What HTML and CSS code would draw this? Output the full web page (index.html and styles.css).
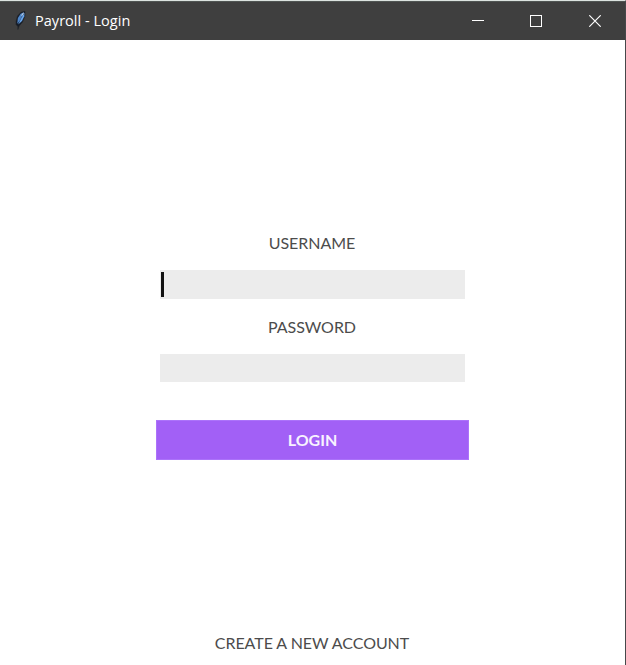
FILE: index.html
```html
<!DOCTYPE html>
<html lang="en">
<head>
<meta charset="utf-8">
<title>Payroll - Login</title>
<link rel="stylesheet" href="styles.css">
</head>
<body>
<div class="window">
  <header class="titlebar">
    <svg class="feather" width="14" height="22" viewBox="0 0 14 22">
      <path d="M12 1.2 8 2.2 4.5 6 3 11 3 14.5 4.8 16.5 4.9 19.5 6.2 16 9.6 12 12 6Z" fill="#151b26" stroke="#24272b" stroke-width=".6"/>
      <path d="M10.8 2.2 7.6 3.8 4.9 8 4.2 13.8 7.4 10.2Z" fill="#4f86c9"/>
      <path d="M11.5 2.8 7.9 8.5 5.2 14.4 9 11 11.3 6.3Z" fill="#69a6ec"/>
      <path d="M9 6 5.4 13.6" fill="none" stroke="#315a8e" stroke-width=".6"/>
      <path d="M10.6 2.8 8.6 5.6" stroke="#b7cfe8" stroke-width="1.1"/>
    </svg>
    <h1 class="title">Payroll - Login</h1>
    <div class="controls">
      <svg width="12" height="12" viewBox="0 0 12 12" shape-rendering="crispEdges"><path d="M0 5.5H12" stroke="#fff"/></svg>
      <svg width="12" height="12" viewBox="0 0 12 12" shape-rendering="crispEdges"><path d="M.5 .5H11.5V11.5H.5Z" fill="none" stroke="#fff"/></svg>
      <svg class="close" width="12" height="12" viewBox="0 0 12 12"><path d="M.3 .3 11.7 11.7M11.7 .3 .3 11.7" stroke="#fff" stroke-width="1.15"/></svg>
    </div>
  </header>
  <main class="content">
    <label class="label username" for="user">USERNAME</label>
    <div class="field first" id="user"><span class="caret"></span></div>
    <label class="label password" for="pass">PASSWORD</label>
    <div class="field second" id="pass"></div>
    <button class="login"><span class="login-text">LOGIN</span></button>
    <a class="label create">CREATE A NEW ACCOUNT</a>
  </main>
</div>
</body>
</html>
```
FILE: styles.css
```css
* { box-sizing: border-box; }
body { margin: 0; background: #fff; overflow: hidden; }
.window {
  height: 665px;
  border-right: 1px solid #46484a;
  border-top: 1px solid #dce3e0;
  display: flex;
  flex-direction: column;
}
.titlebar {
  height: 39px;
  flex: none;
  background: #3f3f3f;
  border-top: 1px solid #505553;
  display: flex;
  align-items: center;
  padding: 0 24px 0 13px;
}
.feather { flex: none; margin-top: -1px; }
.title {
  margin: 0 0 0 8px;
  font: 400 14.5px/20px "Open Sans", "Noto Sans", sans-serif;
  letter-spacing: 0.03px;
  color: #fff;
  white-space: nowrap;
}
.controls { margin-left: auto; display: flex; gap: 46px; }
.controls svg { display: block; }
.controls .close { margin-left: 1px; }
.content {
  flex: 1;
  display: flex;
  flex-direction: column;
  align-items: center;
}
.label {
  font: 400 16px/20px Lato, sans-serif;
  letter-spacing: -0.05px;
  color: #4c4c4c;
  white-space: nowrap;
  padding-right: 1px;
}
.username { margin-top: 193px; }
.field { width: 305px; height: 29px; background: #ececec; }
.first { margin-top: 17px; padding: 2px 0 0 1px; }
.caret { display: block; width: 3px; height: 25px; background: #111; }
.password { margin-top: 18px; }
.second { margin-top: 17px; height: 28px; }
.login {
  width: 313px;
  height: 40px;
  margin-top: 38px;
  padding: 0;
  border: 1px solid #ac73fa;
  background: #a260f6;
  color: #f8f2ff;
  font: 700 16px/20px Lato, sans-serif;
}
.create { margin-top: 173px; }
```
